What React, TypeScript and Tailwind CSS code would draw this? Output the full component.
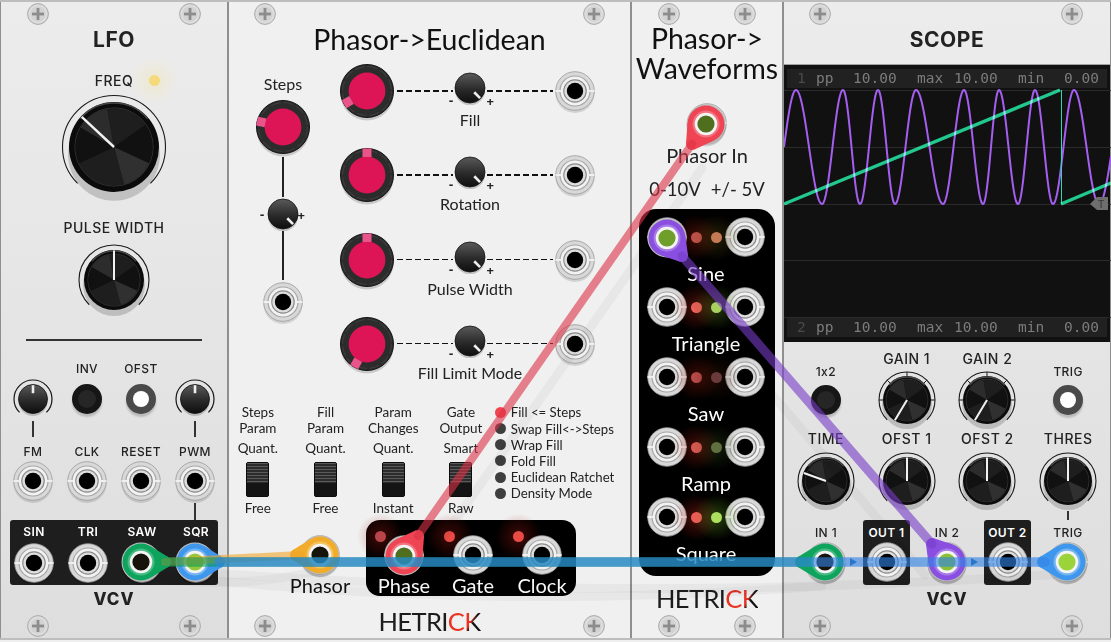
const rad = (a: number) => (a * Math.PI) / 180;
const pt = (c: number, r: number, a: number) => [c + r * Math.sin(rad(a)), c - r * Math.cos(rad(a))];

function Screw() {
  return (
    <svg width="22" height="22" viewBox="0 0 22 22" className="shrink-0">
      <circle cx="11" cy="11" r="10.4" fill="#dcdcdc" stroke="#a8a8a8" strokeWidth="1" />
      <circle cx="11" cy="11" r="7.5" fill="#d2d2d2" />
      <rect x="5" y="9.6" width="12" height="2.8" fill="#8c8c8c" />
      <rect x="9.6" y="5" width="2.8" height="12" fill="#8c8c8c" />
    </svg>
  );
}

function Jack() {
  return (
    <svg width="44" height="44" viewBox="0 0 44 44" className="shrink-0">
      <circle cx="22" cy="24.5" r="19.5" fill="#000" opacity="0.12" />
      <circle cx="22" cy="22" r="19.3" fill="#d8d8d8" stroke="#9a9a9a" strokeWidth="0.8" />
      <circle cx="22" cy="22" r="15.6" fill="#a6a6a6" />
      <circle cx="22" cy="22" r="14.4" fill="#f2f2f2" />
      <circle cx="22" cy="22" r="11.8" fill="#8a8a8a" />
      <circle cx="22" cy="22" r="10.6" fill="#dedede" />
      <rect x="2.5" y="21" width="6" height="2" fill="#efefef" />
      <rect x="35.5" y="21" width="6" height="2" fill="#efefef" />
      <circle cx="22" cy="22" r="8.2" fill="#000" />
    </svg>
  );
}

const wedges: [number, number, string][] = [
  [-60, -10, "#2c2c2c"],
  [-10, 55, "#1e1e1e"],
  [55, 115, "#111111"],
  [115, 165, "#303030"],
  [165, 245, "#1e1e1e"],
  [245, 300, "#111111"],
];

function Knob({ size, R, r, angle, ticks }: { size: number; R: number; r: number; angle: number; ticks?: boolean }) {
  const c = size / 2;
  const [ax, ay] = pt(c, R, -135);
  const [bx, by] = pt(c, R, 135);
  const [px, py] = pt(c, r * 0.98, angle);
  const cap = r * 0.87;
  return (
    <svg width={size} height={size} viewBox={`0 0 ${size} ${size}`} className="shrink-0">
      <circle cx={c} cy={c + r * 0.17} r={r + 1} fill="#000" opacity="0.17" />
      <path d={`M${ax} ${ay}A${R} ${R} 0 1 1 ${bx} ${by}`} fill="none" stroke="#1a1a1a" strokeWidth="1.1" />
      {ticks &&
        [-90, -45, 0, 45, 90].map((t) => {
          const [x1, y1] = pt(c, R, t);
          const [x2, y2] = pt(c, R - 4, t);
          return <line key={t} x1={x1} y1={y1} x2={x2} y2={y2} stroke="#1a1a1a" strokeWidth="1" />;
        })}
      <circle cx={c} cy={c} r={r} fill="#0b0b0b" />
      <path d={`M${pt(c, r - 1, -50).join(" ")}A${r - 1} ${r - 1} 0 0 1 ${pt(c, r - 1, 50).join(" ")}`} fill="none" stroke="#484848" strokeWidth="1.4" />
      <circle cx={c} cy={c} r={cap} fill="#161616" stroke="#3a3a3a" strokeWidth="0.8" />
      {wedges.map(([a, b, fill]) => {
        const [x1, y1] = pt(c, cap - 0.5, a);
        const [x2, y2] = pt(c, cap - 0.5, b);
        return <path key={a} d={`M${c} ${c}L${x1} ${y1}A${cap - 0.5} ${cap - 0.5} 0 0 1 ${x2} ${y2}Z`} fill={fill} />;
      })}
      <line x1={c} y1={c} x2={px} y2={py} stroke="#f2f2f2" strokeWidth={size > 100 ? 2.4 : 2} />
    </svg>
  );
}

function Trim({ angle, ring }: { angle: number; ring?: boolean }) {
  const size = ring ? 44 : 34;
  const c = size / 2;
  const r = ring ? 14.5 : 15;
  const R = 19;
  const [ax, ay] = pt(c, R, -135);
  const [bx, by] = pt(c, R, 135);
  const [x1, y1] = pt(c, r * 0.4, angle);
  const [x2, y2] = pt(c, r * 0.95, angle);
  return (
    <svg width={size} height={size} viewBox={`0 0 ${size} ${size}`} className="shrink-0">
      <defs>
        <linearGradient id="trimGrad" x1="0" y1="0" x2="0" y2="1">
          <stop offset="0" stopColor="#5a5a5a" />
          <stop offset="0.55" stopColor="#2a2a2a" />
          <stop offset="1" stopColor="#0e0e0e" />
        </linearGradient>
      </defs>
      <circle cx={c} cy={c + 2.5} r={r} fill="#000" opacity="0.18" />
      {ring && <path d={`M${ax} ${ay}A${R} ${R} 0 1 1 ${bx} ${by}`} fill="none" stroke="#161616" strokeWidth="1.2" />}
      <circle cx={c} cy={c} r={r} fill="url(#trimGrad)" stroke="#111" strokeWidth="0.8" />
      <line x1={x1} y1={y1} x2={x2} y2={y2} stroke="#efefef" strokeWidth="2.6" />
    </svg>
  );
}

function RedKnob({ angle }: { angle: number }) {
  return (
    <svg width="60" height="60" viewBox="0 0 60 60" className="shrink-0">
      <circle cx="30" cy="33" r="26.5" fill="#000" opacity="0.16" />
      <circle cx="30" cy="30" r="26.5" fill="#2c2c2c" stroke="#151515" strokeWidth="1" />
      <circle cx="30" cy="30" r="24.5" fill="none" stroke="#3c3c3c" strokeWidth="1.2" strokeDasharray="10 2.8" />
      <circle cx="30" cy="30" r="18.4" fill="#dd1557" />
      <rect x="25.5" y="3.5" width="9" height="8.5" fill="#e9558a" transform={`rotate(${angle} 30 30)`} />
    </svg>
  );
}

function Button({ lit }: { lit?: boolean }) {
  return (
    <div className={`flex h-[30px] w-[30px] items-center justify-center rounded-full shadow-[0_3px_2px_rgba(0,0,0,0.18)] ${lit ? "bg-[#4a4a4a]" : "bg-[#161616]"}`}>
      {lit ? <div className="h-4 w-4 rounded-full bg-white" /> : <div className="h-[18px] w-[18px] rounded-full bg-[#262626]" />}
    </div>
  );
}

function Switch() {
  return (
    <div className="flex h-[35px] w-[23px] flex-col overflow-hidden rounded-[2px] border border-[#0c0c0c] bg-[#141414]">
      <div className="h-[20px] bg-[repeating-linear-gradient(180deg,#5a5a5a_0,#5a5a5a_1px,#2c2c2c_1px,#2c2c2c_3px)]" />
    </div>
  );
}

function Led({ color, glow, className = "relative" }: { color: string; glow?: string; className?: string }) {
  return (
    <span className={`block h-[11px] w-[11px] shrink-0 ${className}`}>
      {glow && (
        <span className="absolute -inset-[18px] rounded-full opacity-40" style={{ background: `radial-gradient(circle, ${glow} 0%, transparent 70%)` }} />
      )}
      <span className="absolute inset-0 rounded-full" style={{ background: color }} />
    </span>
  );
}

const vcvBig = "font-[Inter,sans-serif] text-[14px] font-medium leading-[18px] tracking-[0.5px] text-[#222] whitespace-nowrap";
const vcvSmall = "font-[Inter,sans-serif] text-[12px] font-medium leading-[16px] tracking-[0.4px] whitespace-nowrap";
const hetLabel = "font-[Lato,sans-serif] text-[20px] leading-[18px] whitespace-nowrap";
const midLabel = "font-[Lato,sans-serif] text-[16px] leading-[18px] text-[#222] whitespace-nowrap";
const smallLabel = "font-[Lato,sans-serif] text-[13.5px] leading-[16px] text-[#222] whitespace-nowrap text-center";

function VcvLogo() {
  return <div className="font-[Inter,sans-serif] text-[17px] font-extrabold leading-[26px] tracking-[1px] text-[#222]">VCV</div>;
}

function Hetrick({ className = "" }: { className?: string }) {
  return (
    <div className={`font-[Lato,sans-serif] text-[25.5px] leading-[26px] tracking-[-0.6px] text-[#1c1c1c] ${className}`}>
      HETRI<span className="text-[#ea3323]">C</span>
      <span className="bg-gradient-to-br from-[#ea3323] from-45% to-[#111] to-55% bg-clip-text text-transparent">K</span>
    </div>
  );
}

function Panel({ w, light, children }: { w: string; light?: boolean; children: React.ReactNode }) {
  return (
    <div className={`flex h-full shrink-0 flex-col border-x border-[#8f8f8f] ${w} ${light ? "bg-[#f0f0f0]" : "bg-gradient-to-b from-[#ececec] to-[#dedede]"}`}>
      {children}
    </div>
  );
}

function EucRow({ angle, label }: { angle: number; label: string }) {
  const dash = "mt-[29px] h-[1.5px] bg-[repeating-linear-gradient(90deg,#111_0,#111_6px,transparent_6px,transparent_9px)]";
  return (
    <div className="flex h-[84.33px] items-start">
      <RedKnob angle={angle} />
      <div className={`${dash} w-[56px]`} />
      <div className="relative flex w-[34px] flex-col items-center pt-[10px]">
        <Trim angle={135} />
        <span className="absolute -left-[4px] top-[33px] text-[13px] font-bold leading-none text-[#222]">-</span>
        <span className="absolute -right-[7px] top-[34px] text-[13px] font-bold leading-none text-[#222]">+</span>
        <div className={`mt-[6px] ${midLabel}`}>{label}</div>
      </div>
      <div className={`${dash} w-[66px]`} />
      <div className="mt-[8px]"><Jack /></div>
    </div>
  );
}

function QuantCol({ a, b, c, d }: { a: string; b: string; c: string; d: string }) {
  return (
    <div className="flex flex-col items-center">
      <div className={smallLabel}>{a}</div>
      <div className={smallLabel}>{b}</div>
      <div className={`${smallLabel} mt-[4px]`}>{c}</div>
      <div className="mt-[6px]"><Switch /></div>
      <div className={`${smallLabel} mt-[3px]`}>{d}</div>
    </div>
  );
}

function Readout({ n }: { n: string }) {
  return (
    <div className="mx-[3px] grid h-[19px] grid-cols-[19px_37px_64px_37px_64px_46px_auto] bg-[#212121] pl-[10px] font-['DejaVu_Sans_Mono',monospace] text-[14.5px] leading-[19px] text-[#7c7c7c]">
      <span className="text-[#4a4a4a]">{n}</span>
      <span>pp</span>
      <span>10.00</span>
      <span>max</span>
      <span>10.00</span>
      <span>min</span>
      <span>0.00</span>
    </div>
  );
}

const sineKnots: [number, number][] = [
  [783, -0.5], [795, 0], [821, 1], [842, 2], [859, 3], [877, 4], [894, 5], [915, 6], [942, 7], [963, 8],
  [982, 9], [998, 10], [1017, 11], [1034, 12], [1052, 13], [1073, 14], [1098, 15], [1110, 15.45],
];

function sinePath() {
  const pts: string[] = [];
  for (let x = 783; x <= 1110; x += 0.5) {
    let i = 0;
    while (i < sineKnots.length - 2 && sineKnots[i + 1][0] < x) i++;
    const [x0, p0] = sineKnots[i];
    const [x1, p1] = sineKnots[i + 1];
    const phase = p0 + ((x - x0) / (x1 - x0)) * (p1 - p0);
    pts.push(`${x} ${(147 - 57 * Math.cos(phase * Math.PI)).toFixed(2)}`);
  }
  return "M" + pts.join("L");
}

function ScopeChart() {
  return (
    <svg width="327" height="230" viewBox="783 88 327 230" className="block">
      {[90, 147, 204, 260, 317].map((y) => (
        <line key={y} x1="783" x2="1110" y1={y + 0.5} y2={y + 0.5} stroke="#2b2b2b" strokeWidth="1" />
      ))}
      <path d={sinePath()} fill="none" stroke="#a55ff0" strokeWidth="2" />
      <path d="M783 204L1059 90" fill="none" stroke="#12c486" strokeWidth="3.4" className="mix-blend-screen" />
      <path d="M1060.5 90V204" fill="none" stroke="#2fd9b0" strokeWidth="1" />
      <path d="M1060 204L1110 183" fill="none" stroke="#12c486" strokeWidth="3.4" className="mix-blend-screen" />
      <polygon points="1089,204 1096,197 1107,197 1107,210 1096,210" fill="#6e6e6e" />
      <text x="1100" y="208" fontSize="10" fill="#333" textAnchor="middle" fontFamily="Liberation Sans">T</text>
    </svg>
  );
}

function Plug({ x, y, tx, ty, color, core, rim }: { x: number; y: number; tx: number; ty: number; color: string; core: string; rim: string }) {
  const a = Math.atan2(ty - y, tx - x);
  const r1 = 18.5;
  const r2 = 6;
  const d = Math.hypot(tx - x, ty - y);
  const sp = Math.acos((r1 - r2) / d);
  const poly = [
    [x + r1 * Math.cos(a + sp), y + r1 * Math.sin(a + sp)],
    [tx + r2 * Math.cos(a + sp), ty + r2 * Math.sin(a + sp)],
    [tx + r2 * Math.cos(a - sp), ty + r2 * Math.sin(a - sp)],
    [x + r1 * Math.cos(a - sp), y + r1 * Math.sin(a - sp)],
  ]
    .map((p) => p.join(","))
    .join(" ");
  return (
    <g>
      <circle cx={x} cy={y + 3} r={19.5} fill="#000" opacity="0.13" />
      <circle cx={x} cy={y} r={19.5} fill="#bdbdbd" />
      <polygon points={poly} fill={color} />
      <circle cx={tx} cy={ty} r={r2} fill={color} />
      <circle cx={x} cy={y} r={r1} fill={color} />
      <circle cx={x} cy={y} r={13.5} fill={rim} opacity="0.5" />
      <circle cx={x} cy={y} r={11.3} fill="#f4f4f4" />
      <circle cx={x} cy={y} r={8.6} fill={core} />
    </g>
  );
}

function Cables() {
  return (
    <svg width="1111" height="642" viewBox="0 0 1111 642" className="pointer-events-none absolute left-0 top-0">
      <g fill="none" stroke="#000" strokeOpacity="0.035" strokeWidth="9" strokeLinecap="round">
        <path d="M412 582L702 168" />
        <path d="M660 262L925 575" />
        <path d="M150 574Q480 612 822 586" />
        <path d="M195 572Q640 604 1060 574" />
        <path d="M160 578Q240 590 320 570" />
      </g>
      <polygon points="850,558 857,562 850,566" fill="#1f5f95" />
      <polygon points="971,558 978,562 971,566" fill="#1f5f95" />
      <Plug x={141} y={562} tx={165} ty={562} color="#0fa45e" core="#15130a" rim="#7ed3a6" />
      <Plug x={195} y={562} tx={219} ty={562} color="#3e97ec" core="#94c83a" rim="#a9d3f7" />
      <Plug x={320} y={555} tx={296} ty={555} color="#f2ac2c" core="#15130a" rim="#f9d98c" />
      <Plug x={404} y={556} tx={418} ty={536} color="#ef4453" core="#4f6e1e" rim="#f7a0a8" />
      <Plug x={706} y={124} tx={692} ty={144} color="#ef4453" core="#4f6e1e" rim="#f7a0a8" />
      <Plug x={667} y={238} tx={682} ty={256} color="#8a4fe0" core="#6f9e2a" rim="#c5a6f0" />
      <Plug x={825} y={562} tx={801} ty={562} color="#0fa45e" core="#15130a" rim="#7ed3a6" />
      <Plug x={947} y={562} tx={932} ty={544} color="#8a4fe0" core="#8bc034" rim="#c5a6f0" />
      <Plug x={1067} y={562} tx={1043} ty={562} color="#3e97ec" core="#9ad43a" rim="#a9d3f7" />
      <g fill="none" strokeLinecap="round">
        <path d="M165 562L300 555" stroke="#f0a528" strokeOpacity="0.6" strokeWidth="8" />
        <path d="M418 536L692 144" stroke="#dc3246" strokeOpacity="0.6" strokeWidth="8" />
        <path d="M682 256L932 544" stroke="#783cc8" strokeOpacity="0.6" strokeWidth="9" />
        <path d="M165 562H803" stroke="#0a9a5c" strokeOpacity="0.6" strokeWidth="9.5" />
        <path d="M219 562H1045" stroke="#3282e6" strokeOpacity="0.62" strokeWidth="9.5" />
      </g>
    </svg>
  );
}

const waveRows: [string, string, string, string, string][] = [
  ["Sine", "#bf5048", "#c47b55", "#a02010", "#5a4a10"],
  ["Triangle", "#f0605a", "#a8d060", "#c02818", "#5a8a20"],
  ["Saw", "#b84a48", "#6a3a3a", "#901808", "#401808"],
  ["Ramp", "#d85850", "#5f7040", "#b02010", "#304818"],
  ["Square", "#ee5a55", "#aee060", "#c02818", "#60a020"],
];

export default function App() {
  return (
    <div className="relative h-[642px] w-[1111px] overflow-hidden bg-[#efefef]">
      <div className="h-[2px] bg-[#bdbdbd]" />
      <div className="flex h-[636px] bg-[#7f7f7f]">
        {/* LFO */}
        <Panel w="w-[228px]">
          <div className="flex h-6 items-center justify-between px-[26px]"><Screw /><Screw /></div>
          <div className="h-7 text-center font-[Inter,sans-serif] text-[21px] font-bold leading-7 tracking-[0.5px] text-[#222]">LFO</div>
          <div className="mt-[18px] flex h-[18px] justify-center">
            <div className={`relative ${vcvBig}`}>
              FREQ
              <Led color="#f5da7c" glow="#f6e7a8" className="absolute left-[54px] top-[3px]" />
            </div>
          </div>
          <div className="mt-[1px] flex justify-center"><Knob size={112} R={51.5} r={45} angle={-47} /></div>
          <div className={`mt-[16px] text-center ${vcvBig}`}>PULSE WIDTH</div>
          <div className="mt-[5px] flex justify-center"><Knob size={76} R={35} r={30} angle={0} /></div>
          <div className="mx-[25px] mt-[21px] h-[1.5px] bg-[#333]" />
          <div className="mx-auto mt-[20px] grid w-[216px] grid-cols-4 justify-items-center">
            <span />
            <span className={`h-[18px] ${vcvSmall} text-[#222]`}>INV</span>
            <span className={`h-[18px] ${vcvSmall} text-[#222]`}>OFST</span>
            <span />
            <div className="flex h-10 items-center"><Trim angle={0} ring /></div>
            <div className="flex h-10 items-center"><Button /></div>
            <div className="flex h-10 items-center"><Button lit /></div>
            <div className="flex h-10 items-center"><Trim angle={0} ring /></div>
            <div className="mt-[2px] h-4 w-[1.5px] bg-[#333]" />
            <span />
            <span />
            <div className="mt-[2px] h-4 w-[1.5px] bg-[#333]" />
            <span className={`mt-[7px] h-[15px] ${vcvSmall} text-[#222]`}>FM</span>
            <span className={`mt-[7px] h-[15px] ${vcvSmall} text-[#222]`}>CLK</span>
            <span className={`mt-[7px] h-[15px] ${vcvSmall} text-[#222]`}>RESET</span>
            <span className={`mt-[7px] h-[15px] ${vcvSmall} text-[#222]`}>PWM</span>
            <Jack />
            <Jack />
            <Jack />
            <Jack />
            <span />
            <span />
            <span />
            <div className="h-[17px] w-[1.5px] bg-[#333]" />
          </div>
          <div className="mx-[9px] h-[65px] rounded-[3px] bg-[#1e1e1e] pt-[3px]">
            <div className="-mx-[3px] grid w-[216px] grid-cols-4 justify-items-center">
              {["SIN", "TRI", "SAW", "SQR"].map((t) => (
                <span key={t} className={`h-[18px] font-semibold leading-[18px] text-white ${vcvSmall}`}>{t}</span>
              ))}
              <Jack />
              <Jack />
              <Jack />
              <Jack />
            </div>
          </div>
          <div className="mt-[1px] text-center"><VcvLogo /></div>
          <div className="mt-auto flex h-6 items-center justify-between px-[26px]"><Screw /><Screw /></div>
        </Panel>

        {/* Phasor->Euclidean */}
        <Panel w="w-[403px]" light>
          <div className="flex h-6 items-center justify-between px-[25px]"><Screw /><Screw /></div>
          <div className="-mt-[1px] h-7 text-center font-[Lato,sans-serif] text-[28.5px] leading-7 text-[#111]">Phasor-&gt;Euclidean</div>
          <div className="flex pt-[8px]">
            <div className="flex w-[108px] flex-col items-center">
              <div className={`mt-[14px] ${midLabel}`}>Steps</div>
              <div className="mt-[4px]"><RedKnob angle={-77} /></div>
              <div className="h-[40px] w-[1.5px] bg-[#222]" />
              <div className="relative">
                <Trim angle={135} />
                <span className="absolute -left-[6px] top-[11px] text-[13px] font-bold leading-none text-[#222]">-</span>
                <span className="absolute -right-[5px] top-[12px] text-[13px] font-bold leading-none text-[#222]">+</span>
              </div>
              <div className="h-[49px] w-[1.5px] bg-[#222]" />
              <Jack />
            </div>
            <div className="flex flex-col">
              <EucRow angle={-120} label="Fill" />
              <EucRow angle={0} label="Rotation" />
              <EucRow angle={0} label="Pulse Width" />
              <EucRow angle={-151} label="Fill Limit Mode" />
            </div>
          </div>
          <div className="-ml-[5px] mt-[6px] flex">
            <div className="grid grid-cols-[repeat(4,67.7px)]">
              <QuantCol a="Steps" b="Param" c="Quant." d="Free" />
              <QuantCol a="Fill" b="Param" c="Quant." d="Free" />
              <QuantCol a="Param" b="Changes" c="Quant." d="Instant" />
              <QuantCol a="Gate" b="Output" c="Smart" d="Raw" />
            </div>
            <div className="flex flex-col">
              {["Fill <= Steps", "Swap Fill<->Steps", "Wrap Fill", "Fold Fill", "Euclidean Ratchet", "Density Mode"].map((t, i) => (
                <div key={t} className="flex h-[16.2px] items-center gap-[5px]">
                  <Led color={i === 0 ? "#ef4650" : "#3e3e3e"} />
                  <span className="font-[Lato,sans-serif] text-[13.2px] leading-4 text-[#222] whitespace-nowrap">{t}</span>
                </div>
              ))}
            </div>
          </div>
          <div className="mt-[4px] flex">
            <div className="ml-[69px] flex w-[44px] flex-col items-center pt-[13px]">
              <Jack />
              <div className={`-mt-[1px] ${hetLabel} text-[#111]`}>Phasor</div>
            </div>
            <div className="ml-[24px] grid h-[76px] w-[210px] grid-cols-[repeat(3,69px)] rounded-[14px] bg-black pl-[3.5px]">
              {["Phase", "Gate", "Clock"].map((t, i) => (
                <div key={t} className="relative flex flex-col items-center pt-[13px]">
                  <Led color={i === 0 ? "#b8454a" : "#ea4a44"} glow="#a01810" className="absolute left-[5px] top-[11px]" />
                  <div className="relative"><Jack /></div>
                  <div className={`-mt-[1px] text-white ${hetLabel}`}>{t}</div>
                </div>
              ))}
            </div>
          </div>
          <div className="mt-auto flex h-6 items-center justify-between px-[25px]">
            <Screw />
            <Hetrick className="-mt-[10px]" />
            <Screw />
          </div>
        </Panel>

        {/* Phasor->Waveforms */}
        <Panel w="w-[152px]" light>
          <div className="flex h-6 items-center justify-center gap-[54px]"><Screw /><Screw /></div>
          <div className="-mt-[3px] mb-[1px] text-center font-[Lato,sans-serif] text-[28.4px] leading-[30px] text-[#111]">
            Phasor-&gt;
            <br />
            Waveforms
          </div>
          <div className="mt-[17px] flex justify-center"><Jack /></div>
          <div className={`mt-[1px] text-center text-[#222] ${hetLabel}`}>Phasor In</div>
          <div className="mt-[16px] flex h-[18px] justify-center gap-[10px] font-[Lato,sans-serif] text-[18.5px] leading-[18px] text-[#222]">
            <span>0-10V</span>
            <span>+/- 5V</span>
          </div>
          <div className="mx-[7px] mt-[11px] h-[367px] rounded-[17px] bg-black pl-[6px] pr-[8px] pt-[6px]">
            {waveRows.map(([t, l, r, gl, gr]) => (
              <div key={t} className="h-[70px]">
                <div className="flex items-center">
                  <Jack />
                  <div className="flex flex-1 justify-center gap-[9px]">
                    <Led color={l} glow={gl} />
                    <Led color={r} glow={gr} />
                  </div>
                  <Jack />
                </div>
                <div className={`mt-[5px] text-center text-white ${hetLabel}`}>{t}</div>
              </div>
            ))}
          </div>
          <div className="mt-[9px] flex justify-center"><Hetrick /></div>
          <div className="mt-auto flex h-6 items-center justify-center gap-[54px]"><Screw /><Screw /></div>
        </Panel>

        {/* Scope */}
        <Panel w="w-[328px]">
          <div className="flex h-6 items-center justify-between pl-[25px] pr-[27px]"><Screw /><Screw /></div>
          <div className="h-7 text-center font-[Inter,sans-serif] text-[21px] font-bold leading-7 tracking-[0.5px] text-[#222]">SCOPE</div>
          <div className="h-[11px] border-b border-[#a0a0a0]" />
          <div className="flex h-[277px] flex-col bg-[#111] pt-[4px]">
            <Readout n="1" />
            <ScopeChart />
            <Readout n="2" />
          </div>
          <div className="mx-auto mt-[1px] grid w-[323px] grid-cols-4 justify-items-center">
            <div className="flex h-[87px] flex-col items-center justify-end pb-[15px]">
              <span className={`mb-[5px] ${vcvSmall} text-[#222]`}>1x2</span>
              <Button />
            </div>
            <div className="flex h-[87px] flex-col items-center justify-end">
              <span className={`mb-[2px] ${vcvBig}`}>GAIN 1</span>
              <Knob size={60} R={28} r={24} angle={-149} ticks />
            </div>
            <div className="flex h-[87px] flex-col items-center justify-end">
              <span className={`mb-[2px] ${vcvBig}`}>GAIN 2</span>
              <Knob size={60} R={28} r={24} angle={-149} ticks />
            </div>
            <div className="flex h-[87px] flex-col items-center justify-end pb-[15px]">
              <span className={`mb-[5px] ${vcvSmall} text-[#222]`}>TRIG</span>
              <Button lit />
            </div>
            <span className={vcvBig}>TIME</span>
            <span className={vcvBig}>OFST 1</span>
            <span className={vcvBig}>OFST 2</span>
            <span className={vcvBig}>THRES</span>
            <div className="mt-[3px]"><Knob size={60} R={28} r={24} angle={-70} /></div>
            <div className="mt-[3px]"><Knob size={60} R={28} r={24} angle={0} /></div>
            <div className="mt-[3px]"><Knob size={60} R={28} r={24} angle={0} /></div>
            <div className="mt-[3px]"><Knob size={60} R={28} r={24} angle={0} /></div>
            <span />
            <span />
            <span />
            <div className="h-[9px] w-[1.5px] bg-[#333]" />
          </div>
          <div className="mx-auto grid h-[65px] w-[302.5px] grid-cols-5 justify-items-center">
            {["IN 1", "OUT 1", "IN 2", "OUT 2", "TRIG"].map((t) => {
              const out = t.startsWith("OUT");
              return (
                <div key={t} className={`flex h-[65px] w-[47px] flex-col items-center rounded-[3px] pt-[5px] ${out ? "bg-[#1e1e1e]" : ""}`}>
                  <span className={`h-[15px] leading-[15px] ${vcvSmall} ${out ? "font-semibold text-white" : "text-[#222]"}`}>{t}</span>
                  <Jack />
                </div>
              );
            })}
          </div>
          <div className="mt-[1px] text-center"><VcvLogo /></div>
          <div className="mt-auto flex h-6 items-center justify-between pl-[25px] pr-[27px]"><Screw /><Screw /></div>
        </Panel>
      </div>
      <div className="h-[2px] bg-[#bdbdbd]" />
      <Cables />
    </div>
  );
}
